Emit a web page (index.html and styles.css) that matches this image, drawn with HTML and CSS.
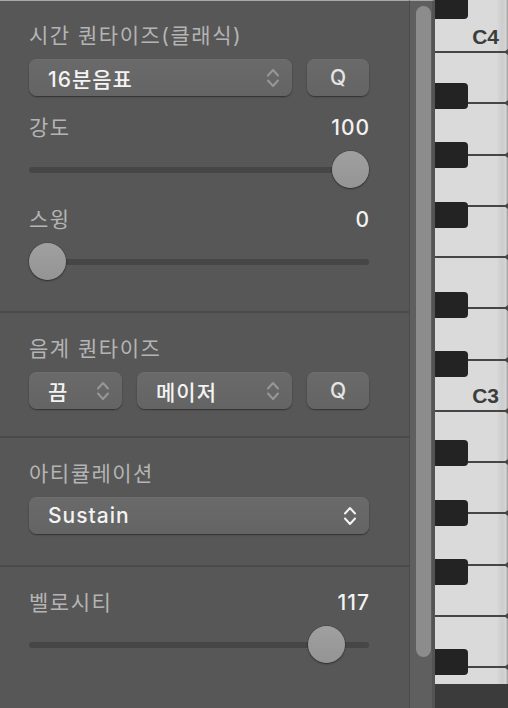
FILE: index.html
```html
<!DOCTYPE html>
<html lang="ko">
<head>
<meta charset="utf-8">
<title>Quantize</title>
<link rel="stylesheet" href="styles.css">
</head>
<body>
<div class="app">
  <div class="panel">
    <section class="group g1">
      <div class="heading">시간 퀀타이즈(클래식)</div>
      <div class="ctrl-row">
        <div class="popup grow"><span>16분음표</span>
          <svg class="chev dim" viewBox="0 0 14 24" width="14" height="24"><path d="M2 9.5 L7 4 L12 9.5 M2 14.5 L7 20 L12 14.5"/></svg>
        </div>
        <div class="btn">Q</div>
      </div>
      <div class="label-row"><span>강도</span><span class="val">100</span></div>
      <div class="slider"><div class="track"></div><div class="thumb" style="left:303px"></div></div>
      <div class="label-row"><span>스윙</span><span class="val">0</span></div>
      <div class="slider"><div class="track"></div><div class="thumb" style="left:0px"></div></div>
    </section>
    <section class="group g2">
      <div class="heading">음계 퀀타이즈</div>
      <div class="ctrl-row">
        <div class="popup small"><span>끔</span>
          <svg class="chev dim" viewBox="0 0 14 24" width="14" height="24"><path d="M2 9.5 L7 4 L12 9.5 M2 14.5 L7 20 L12 14.5"/></svg>
        </div>
        <div class="popup grow"><span>메이저</span>
          <svg class="chev dim" viewBox="0 0 14 24" width="14" height="24"><path d="M2 9.5 L7 4 L12 9.5 M2 14.5 L7 20 L12 14.5"/></svg>
        </div>
        <div class="btn">Q</div>
      </div>
    </section>
    <section class="group g3">
      <div class="heading">아티큘레이션</div>
      <div class="ctrl-row">
        <div class="popup grow"><span>Sustain</span>
          <svg class="chev" viewBox="0 0 14 24" width="14" height="24"><path d="M2 9.5 L7 4 L12 9.5 M2 14.5 L7 20 L12 14.5"/></svg>
        </div>
      </div>
    </section>
    <section class="group g4">
      <div class="label-row first"><span>벨로시티</span><span class="val">117</span></div>
      <div class="slider"><div class="track"></div><div class="thumb" style="left:279px"></div></div>
    </section>
  </div>
  <div class="scroller"><div class="scroll-thumb"></div></div>
  <div class="piano">
    <div class="keys">
      <div class="wk first"><span class="note">C4</span></div>
      <div class="wk"></div>
      <div class="wk"></div>
      <div class="wk"></div>
      <div class="wk"></div>
      <div class="wk"></div>
      <div class="wk"></div>
      <div class="wk"><span class="note">C3</span></div>
      <div class="wk"></div>
      <div class="wk"></div>
      <div class="wk"></div>
      <div class="wk"></div>
      <div class="wk"></div>
      <div class="wk"></div>
      <div class="bk b1"></div>
      <div class="bk b2"></div>
      <div class="bk b3"></div>
      <div class="bk b4"></div>
      <div class="bk b5"></div>
      <div class="bk b6"></div>
      <div class="bk b7"></div>
      <div class="bk b8"></div>
      <div class="bk b9"></div>
      <div class="bk b10"></div>
    </div>
    <div class="piano-foot"></div>
  </div>
</div>
</body>
</html>
```

FILE: styles.css
```css
* { box-sizing: border-box; margin: 0; padding: 0; }
html, body { width: 508px; height: 708px; overflow: hidden; background: #575757; }
body { font-family: "Inter", "Noto Sans CJK KR", sans-serif; -webkit-font-smoothing: antialiased; }

.app { display: flex; height: 708px; }

.panel {
  width: 410px;
  flex: none;
  background: #575757;
  border-right: 1px solid #4b4b4b;
  border-top: 1px solid #a8a8a8;
}

.group {
  padding: 23px 40px 0 29px;
  border-bottom: 2px solid #4a4a4a;
}
.g1 { padding-top: 22px; padding-bottom: 30px; }
.g2 { padding-bottom: 27px; }
.g3 { padding-bottom: 31px; }
.g4 { border-bottom: none; }

.heading {
  height: 26px;
  line-height: 26px;
  font-size: 21px;
  letter-spacing: 1.5px;
  color: #b4b4b4;
  margin-bottom: 10px;
  white-space: nowrap;
}

.ctrl-row { display: flex; gap: 15px; height: 37px; }

.popup {
  display: flex;
  align-items: center;
  height: 37px;
  padding: 0 12px 0 19px;
  border-radius: 8px;
  background: linear-gradient(#6a6a6a, #646464);
  box-shadow: 0 1px 1.5px rgba(0,0,0,0.45), inset 0 0.5px 0 rgba(255,255,255,0.08);
  color: #f3f3f3;
  font-size: 21px;
  font-weight: 500;
  letter-spacing: 1px;
  white-space: nowrap;
}
.popup span { flex: 1; }
.popup.grow { flex: 1; }
.popup.small { width: 93px; flex: none; }

.chev { flex: none; display: block; }
.chev path { fill: none; stroke: #f2f2f2; stroke-width: 2; stroke-linecap: round; stroke-linejoin: round; }
.chev.dim path { stroke: #979797; }

.btn {
  width: 62px;
  flex: none;
  height: 37px;
  display: flex;
  align-items: center;
  justify-content: center;
  border-radius: 8px;
  background: linear-gradient(#6a6a6a, #646464);
  box-shadow: 0 1px 1.5px rgba(0,0,0,0.45), inset 0 0.5px 0 rgba(255,255,255,0.08);
  color: #e4e4e4;
  font-size: 21px;
  font-weight: 500;
}

.label-row {
  display: flex;
  justify-content: space-between;
  height: 26px;
  line-height: 26px;
  font-size: 21px;
  letter-spacing: 1.5px;
  color: #b4b4b4;
  margin-bottom: 10px;
}
.ctrl-row + .label-row { margin-top: 19px; }
.slider + .label-row { margin-top: 18px; }
.val { color: #f2f2f2; font-weight: 500; letter-spacing: 1px; margin-right: -1px; }

.slider { position: relative; height: 38px; }
.track {
  position: absolute;
  left: 0; right: 0; top: 16px;
  height: 6px;
  border-radius: 3px;
  background: #464646;
}
.thumb {
  position: absolute;
  top: 0;
  width: 37px;
  height: 37px;
  border-radius: 50%;
  background: linear-gradient(#a0a0a0, #949494);
  box-shadow: 0 1px 2px rgba(0,0,0,0.45), 0 0 0 0.5px rgba(0,0,0,0.2);
}

.scroller {
  width: 25px;
  flex: none;
  background: #5f5f5f;
  border-top: 1px solid #a8a8a8;
  border-right: 3px solid #545454;
  padding: 5px 0 0 6px;
}
.scroll-thumb {
  width: 15px;
  height: 651px;
  border-radius: 8px;
  background: #8c8c8c;
}

.piano { width: 73px; flex: none; display: flex; flex-direction: column; }
.keys { position: relative; height: 684px; overflow: hidden; }
.piano-foot { flex: 1; background: #3b3b3b; }

.wk {
  position: relative;
  height: 51.25px;
  border-bottom: 2px solid #454545;
  background: linear-gradient(to right, #dadada 0, #dadada 84%, #cdcdcd 92%, #d5d5d5 97%, #9a9a9a 100%);
  display: flex;
  justify-content: flex-end;
  align-items: flex-end;
  padding: 0 9px 4px 0;
}
.wk.first { height: 53px; }
.wk::after {
  content: "";
  position: absolute;
  right: 0;
  bottom: -4px;
  border-style: solid;
  border-width: 3px 4px 3px 0;
  border-color: transparent #454545 transparent transparent;
  z-index: 1;
}
.note {
  font-family: "Liberation Sans", Arial, sans-serif;
  font-weight: 700;
  font-size: 21px;
  line-height: 21px;
  color: #3c3c3c;
}

.bk {
  position: absolute;
  left: 0;
  width: 33px;
  height: 26px;
  background: #232323;
  border-radius: 0 4px 4px 0;
  z-index: 2;
}
.b1 { top: -7px; }
.b2 { top: 83px; }
.b3 { top: 142px; }
.b4 { top: 202px; }
.b5 { top: 292px; }
.b6 { top: 351px; }
.b7 { top: 440px; }
.b8 { top: 500px; }
.b9 { top: 559px; }
.b10 { top: 649px; }
```
